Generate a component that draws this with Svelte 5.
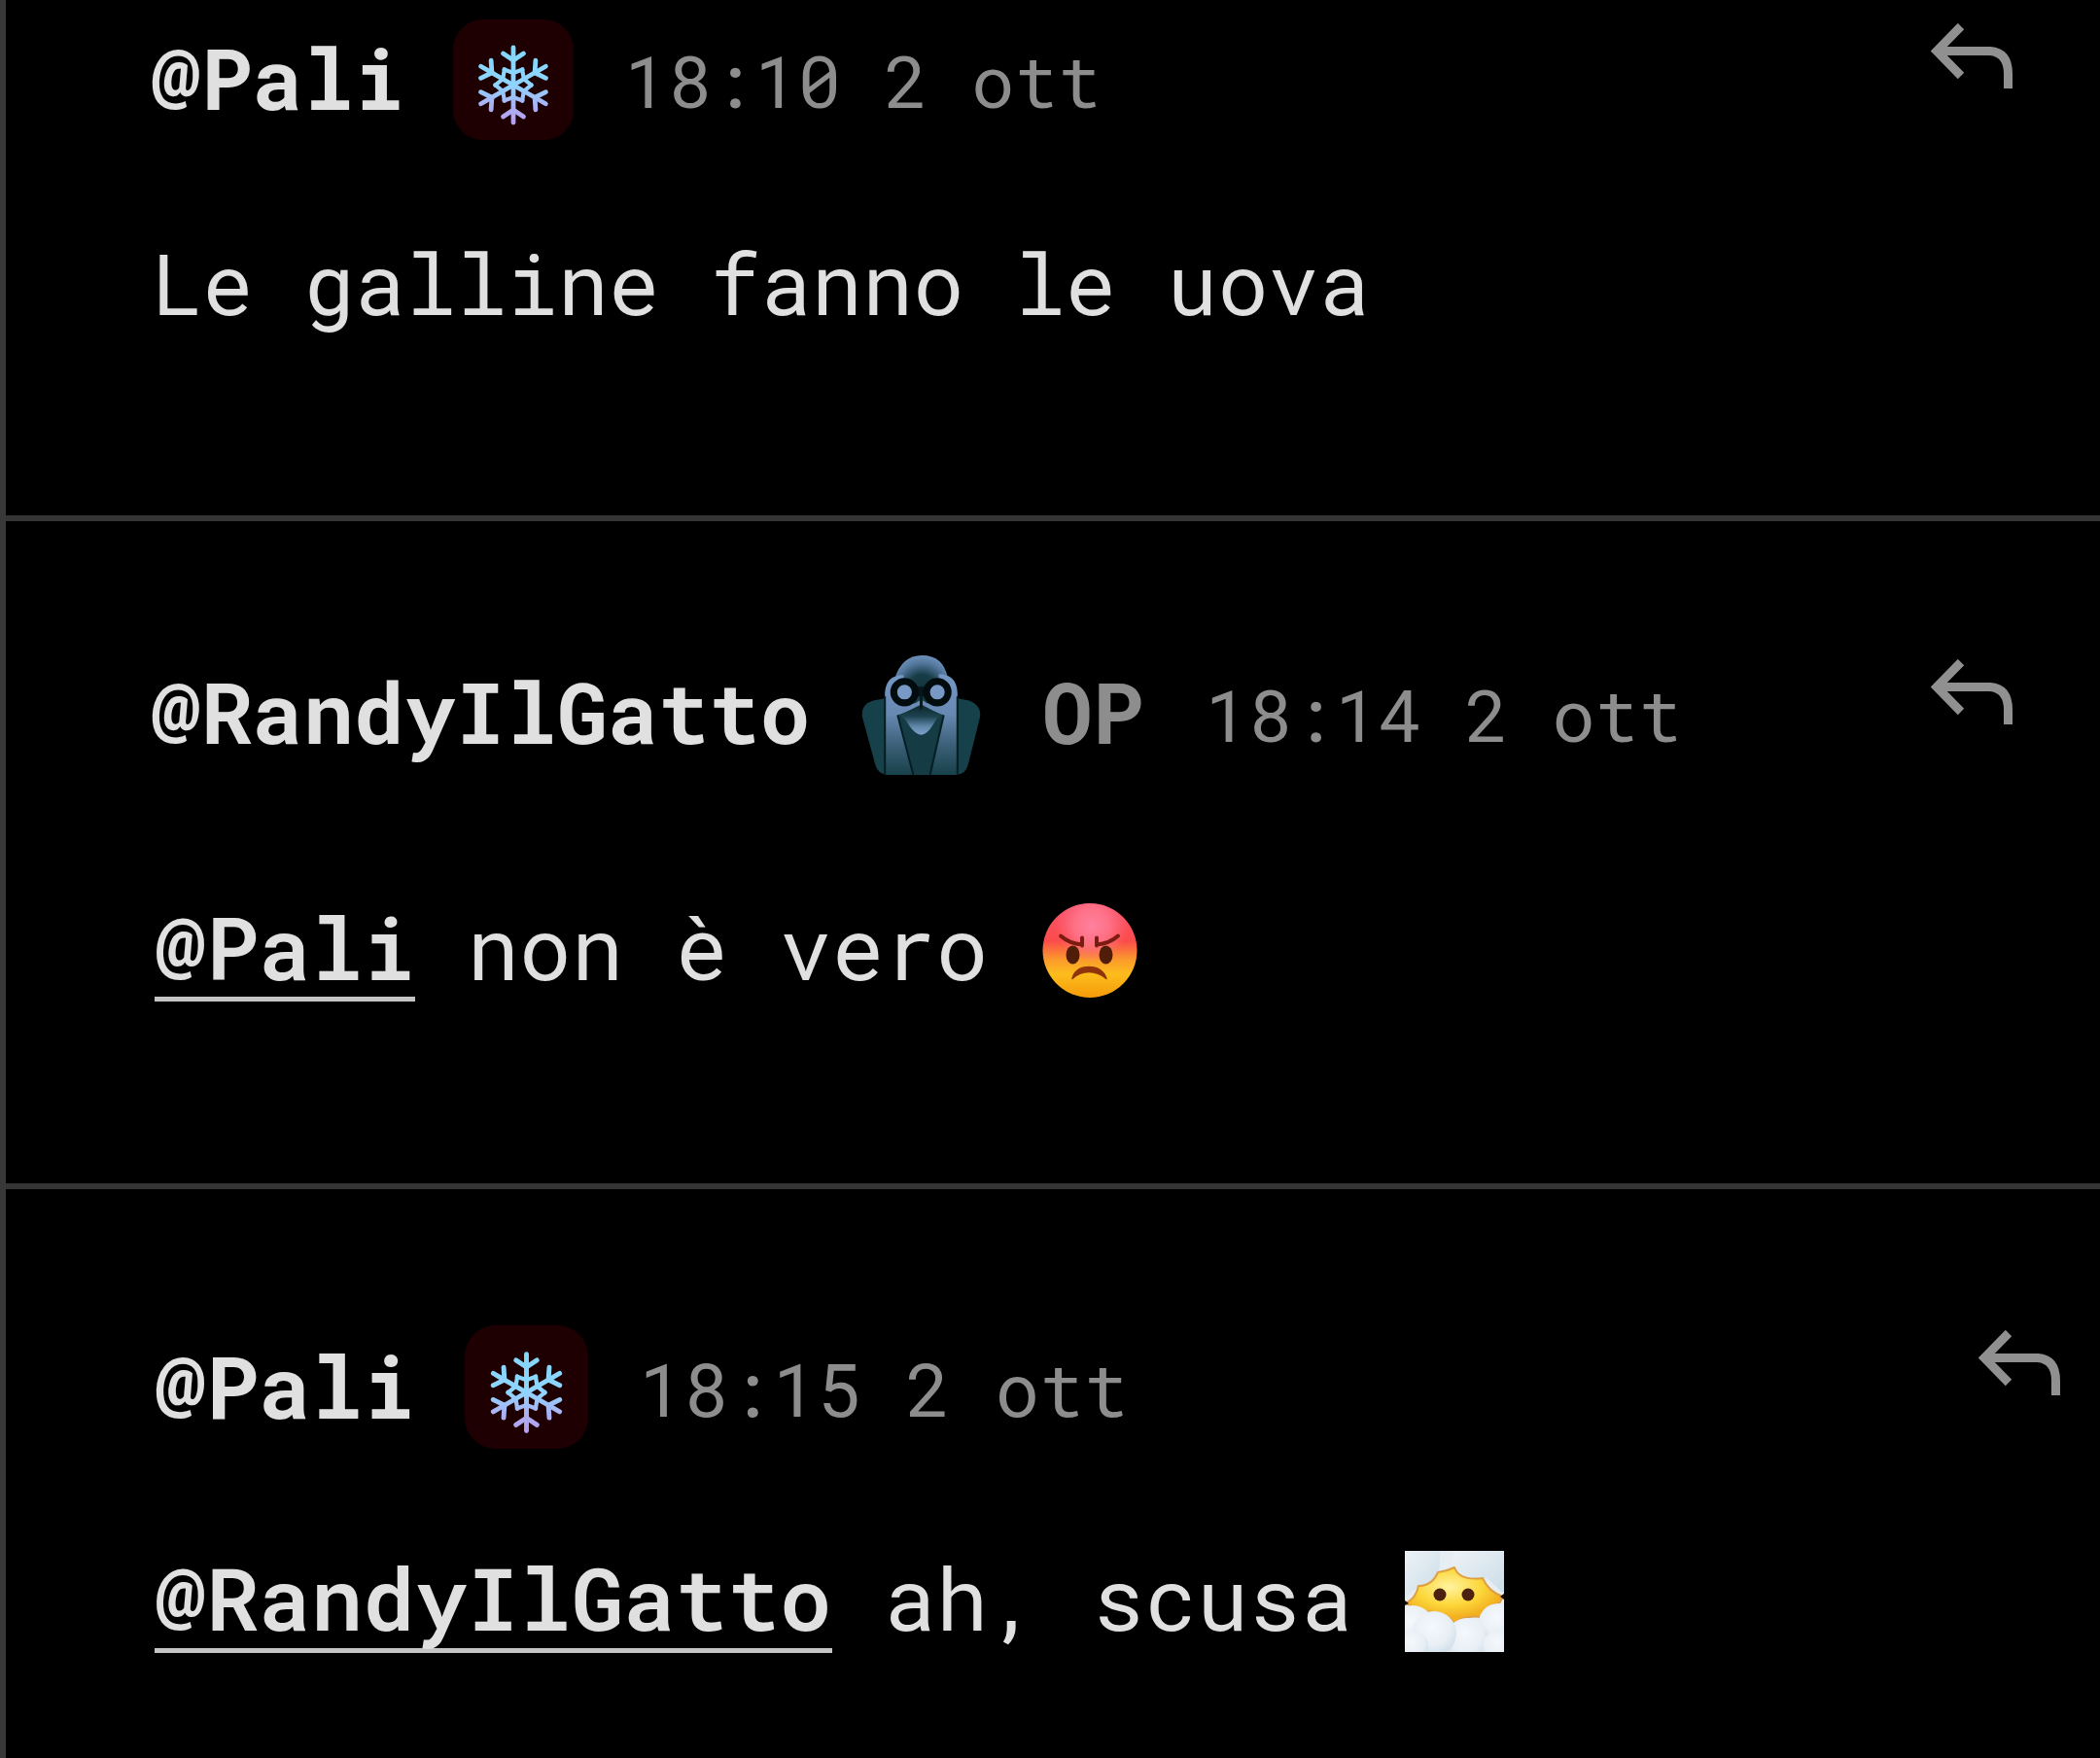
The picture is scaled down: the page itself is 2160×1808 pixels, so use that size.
<script lang="ts">
  interface Comment {
    id: string;
    author: string;
    badge: "snow" | "hood";
    op?: boolean;
    time: string;
    mention?: string;
    text: string;
    emoji?: "angry" | "clouds";
  }

  const comments: Comment[] = [
    { id: "first", author: "@Pali", badge: "snow", time: "18:10 2 ott", text: "Le galline fanno le uova" },
    { id: "second", author: "@RandyIlGatto", badge: "hood", op: true, time: "18:14 2 ott", mention: "@Pali", text: "non è vero", emoji: "angry" },
    { id: "third", author: "@Pali", badge: "snow", time: "18:15 2 ott", mention: "@RandyIlGatto", text: "ah, scusa", emoji: "clouds" },
  ];

  const arms = [0, 60, 120, 180, 240, 300];
</script>

<main class="thread">
  {#each comments as c (c.id)}
    <article class="comment {c.id}">
      <header>
        <span class="author">{c.author}</span>
        {#if c.badge === "snow"}
          <svg class="badge" viewBox="0 0 124 124">
            <defs>
              <linearGradient id="ice-{c.id}" gradientUnits="userSpaceOnUse" x1="0" y1="26" x2="0" y2="108">
                <stop offset="0" stop-color="#82d8fb" />
                <stop offset="0.5" stop-color="#8fd4ff" />
                <stop offset="0.75" stop-color="#a9b4f4" />
                <stop offset="1" stop-color="#b59cf0" />
              </linearGradient>
              <mask id="flake-{c.id}" maskUnits="userSpaceOnUse" x="0" y="0" width="124" height="124">
                {#each arms as a}
                  <g transform="rotate({a} 62 67.5)" fill="none" stroke="#fff" stroke-width="4.8">
                    <path d="M62 67.5V29" stroke-linecap="round" />
                    <path d="M51.500 35L62 42L72.500 35" stroke-linecap="round" stroke-linejoin="round" />
                    <path d="M52.500 51.500L62 55L71.500 51.500" stroke-width="4.2" stroke-linecap="round" />
                  </g>
                {/each}
              </mask>
            </defs>
            <rect width="124" height="124" rx="31" fill="#1f0002" />
            <rect width="124" height="124" fill="url(#ice-{c.id})" mask="url(#flake-{c.id})" />
          </svg>
        {:else}
          <svg class="badge" viewBox="0 0 122 122">
            <defs>
              <radialGradient id="dome" gradientUnits="userSpaceOnUse" cx="62" cy="34" r="36">
                <stop offset="0" stop-color="#12343b" />
                <stop offset="0.4" stop-color="#173d47" />
                <stop offset="0.72" stop-color="#52759a" />
                <stop offset="1" stop-color="#7497c2" />
              </radialGradient>
              <linearGradient id="face" gradientUnits="userSpaceOnUse" x1="0" y1="20" x2="0" y2="122">
                <stop offset="0" stop-color="#7597c4" />
                <stop offset="0.4" stop-color="#6688b1" />
                <stop offset="0.7" stop-color="#3c6078" />
                <stop offset="1" stop-color="#17414a" />
              </linearGradient>
              <linearGradient id="beak" gradientUnits="userSpaceOnUse" x1="0" y1="54" x2="0" y2="82">
                <stop offset="0" stop-color="#102f36" />
                <stop offset="0.3" stop-color="#1d4350" />
                <stop offset="0.65" stop-color="#5f86a8" />
                <stop offset="1" stop-color="#7fa5cf" />
              </linearGradient>
            </defs>
            <path d="M24 44L12 46Q-1 50 1 63L14 111Q17 122 28 122H96Q106 122 109 111L121 63Q123 51 110 46L98 44Z" fill="#17414a" />
            <path d="M34 24Q41 0 62 0T88 22V58H34Z" fill="url(#dome)" />
            <path d="M24 122V38Q25 20 43 20L44 46Q52 53 59 46Q61 50 58 53Q47 62 37 61L53 122Z" fill="url(#face)" />
            <path d="M98 122V38Q97 19 79 19L78 46Q70 53 63 46Q61 50 64 53Q75 62 84 61L70 122Z" fill="url(#face)" />
            <path d="M37 61L53 122H70L84 61L61 52Z" fill="#153c44" />
            <path d="M24 42V122M98 42V122M37 61L53 122M84 61L70 122" fill="none" stroke="#061d23" stroke-width="2" />
            <path d="M61 50L82 61Q78 62 73 71Q67 81 61 81T49 72Q44 63 39 61Z" fill="url(#beak)" />
            <path d="M61 42V55" stroke="#0a1c21" stroke-width="3" />
            <path d="M50 32H72V42H50Z" fill="#061519" />
            <circle cx="44" cy="37.5" r="11" fill="#7899c6" stroke="#020b0e" stroke-width="7" />
            <circle cx="77.5" cy="37.5" r="11" fill="#7899c6" stroke="#020b0e" stroke-width="7" />
          </svg>
        {/if}
        {#if c.op}<span class="op">OP</span>{/if}
        <time>{c.time}</time>
        <svg class="reply" viewBox="0 0 84 68" fill="none" stroke="#909090" stroke-width="9">
          <path d="M31 3L6 28.500L31 54" />
          <path d="M6 28.500H61Q79.500 30 79.500 52V67" />
        </svg>
      </header>
      <p>
        {#if c.mention}<b class="mention">{c.mention}</b>{/if}
        <span>{c.text}</span>
        {#if c.emoji === "angry"}
          <svg class="angry" viewBox="0 0 98 98">
            <defs>
              <linearGradient id="rage" x1="0" y1="0" x2="0" y2="1">
                <stop offset="0" stop-color="#f9546f" />
                <stop offset="0.4" stop-color="#fb4c4b" />
                <stop offset="0.6" stop-color="#fb9b2c" />
                <stop offset="0.75" stop-color="#fdbd1c" />
                <stop offset="1" stop-color="#f59a0a" />
              </linearGradient>
              <radialGradient id="blush" cx="0.52" cy="0.24" r="0.38">
                <stop offset="0" stop-color="#ff82a0" />
                <stop offset="0.5" stop-color="#ff7890" stop-opacity="0.8" />
                <stop offset="1" stop-color="#ff6d84" stop-opacity="0" />
              </radialGradient>
            </defs>
            <circle cx="49" cy="49" r="48.5" fill="url(#rage)" />
            <circle cx="49" cy="49" r="48.5" fill="url(#blush)" />
            <ellipse cx="31.5" cy="53.5" rx="7" ry="9.5" fill="#4f1d08" />
            <ellipse cx="65.5" cy="53.5" rx="7" ry="9.5" fill="#4f1d08" />
            <path d="M19 34Q28 42 41 43M41 36V44M78 34Q69 42 56 43M56 36V44" fill="none" stroke="#7b1b12" stroke-width="4" stroke-linecap="round" />
            <path d="M31 78Q34 66 48 66T66 78Q58 71 48 71T31 78Z" fill="#8f350b" stroke="#8f350b" stroke-width="1.5" stroke-linejoin="round" />
          </svg>
        {:else if c.emoji === "clouds"}
          <svg class="clouds" viewBox="0 0 102 104">
            <defs>
              <radialGradient id="sun" cx="0.45" cy="0.35" r="0.55">
                <stop offset="0" stop-color="#fff3a0" />
                <stop offset="0.6" stop-color="#fcd73a" />
                <stop offset="1" stop-color="#f3b021" />
              </radialGradient>
              <linearGradient id="sky" x1="0" y1="0" x2="1" y2="1">
                <stop offset="0" stop-color="#edf2f7" />
                <stop offset="1" stop-color="#cbdde7" />
              </linearGradient>
              <radialGradient id="puff" cx="0.45" cy="0.35" r="0.7">
                <stop offset="0" stop-color="#f5f8fc" />
                <stop offset="0.6" stop-color="#e8eff5" />
                <stop offset="1" stop-color="#cbdbe6" />
              </radialGradient>
            </defs>
            <rect width="102" height="104" fill="#e6edf3" />
            <path d="M0 0H36V16Q30 34 14 36L0 48Z" fill="url(#sky)" />
            <path d="M50 0H102V44L84 28Q62 30 50 16Z" fill="url(#sky)" />
            <path d="M0 54Q11 50 14 36Q28 36 34 22Q43 21 51 17Q56 31 80 28Q86 42 101 47L97 54Q84 56 78 68Q62 66 51 74Q40 60 18 63Q12 58 0 54Z" fill="url(#sun)" stroke="#dfa045" stroke-width="2" stroke-linejoin="round" />
            <rect y="80" width="102" height="24" fill="#e3ebf2" />
            <circle cx="96" cy="74" r="20" fill="url(#puff)" />
            <circle cx="64" cy="91" r="22" fill="url(#puff)" />
            <circle cx="8" cy="78" r="22" fill="url(#puff)" />
            <circle cx="30" cy="85" r="23" fill="url(#puff)" />
            <circle cx="8" cy="98" r="16" fill="url(#puff)" />
            <circle cx="96" cy="98" r="16" fill="url(#puff)" />
            <circle cx="36" cy="45" r="6.5" fill="#4d210f" />
            <circle cx="65" cy="45" r="6.5" fill="#4d210f" />
            <path d="M0 51L4 54L0 56ZM102 44L98 47L102 50Z" fill="#1a0d04" />
          </svg>
        {/if}
      </p>
    </article>
  {/each}
</main>

<style>
  :global(body) {
    background: #000;
  }

  .thread {
    box-sizing: border-box;
    height: 1808px;
    overflow: hidden;
    border-left: 6px solid #383838;
    background: #000;
    color: #e0e0e0;
    font-family: "Roboto Mono", "DejaVu Sans Mono", monospace;
  }

  .comment {
    box-sizing: border-box;
    padding-left: 149px;
    border-bottom: 6px solid #353535;
    font-size: 87px;
  }
  .first { height: 536px; padding-top: 20px; }
  .second { height: 687px; padding-top: 138px; }
  .third { height: 585px; padding: 140px 0 0 153px; border-bottom: 0; font-size: 89.3px; }

  header {
    display: flex;
    align-items: baseline;
    height: 124px;
    line-height: 120px;
  }
  .second header { line-height: 116px; }
  .third header { line-height: 122px; }

  .author, .op { font-weight: 700; }

  .badge {
    align-self: flex-start;
    width: 124px;
    height: 124px;
    margin-left: 50px;
  }
  .second .badge { width: 123px; height: 123px; margin-left: 52px; }
  .third .badge { width: 127px; height: 127px; margin-left: 51px; }

  .op {
    margin-left: 63px;
    color: #8d8d8d;
  }

  time {
    margin-left: 52px;
    color: #8d8d8d;
    font-size: 0.855em;
    transform: translateY(-2px);
  }
  .op + time { margin-left: 63px; }

  .reply {
    align-self: flex-start;
    width: 84px;
    height: 68px;
    margin: 4px 90px 0 auto;
  }
  .third .reply { margin: 5px 41px 0 auto; }

  p {
    display: flex;
    gap: 53.6px;
    height: 120px;
    margin: 87px 0 0 1px;
    line-height: 120px;
    white-space: pre;
  }
  .second p { margin: 115px 0 0 4px; font-size: 89.3px; }
  .third p { margin: 95px 0 0; }

  .mention {
    height: 112px;
    border-bottom: 5px solid #c4c4c4;
    font-weight: 600;
  }
  .third .mention { height: 113px; }

  .angry { width: 98px; height: 99px; margin: 15px 0 0 2px; }
  .clouds { width: 102px; height: 104px; margin-top: 13px; }
</style>
